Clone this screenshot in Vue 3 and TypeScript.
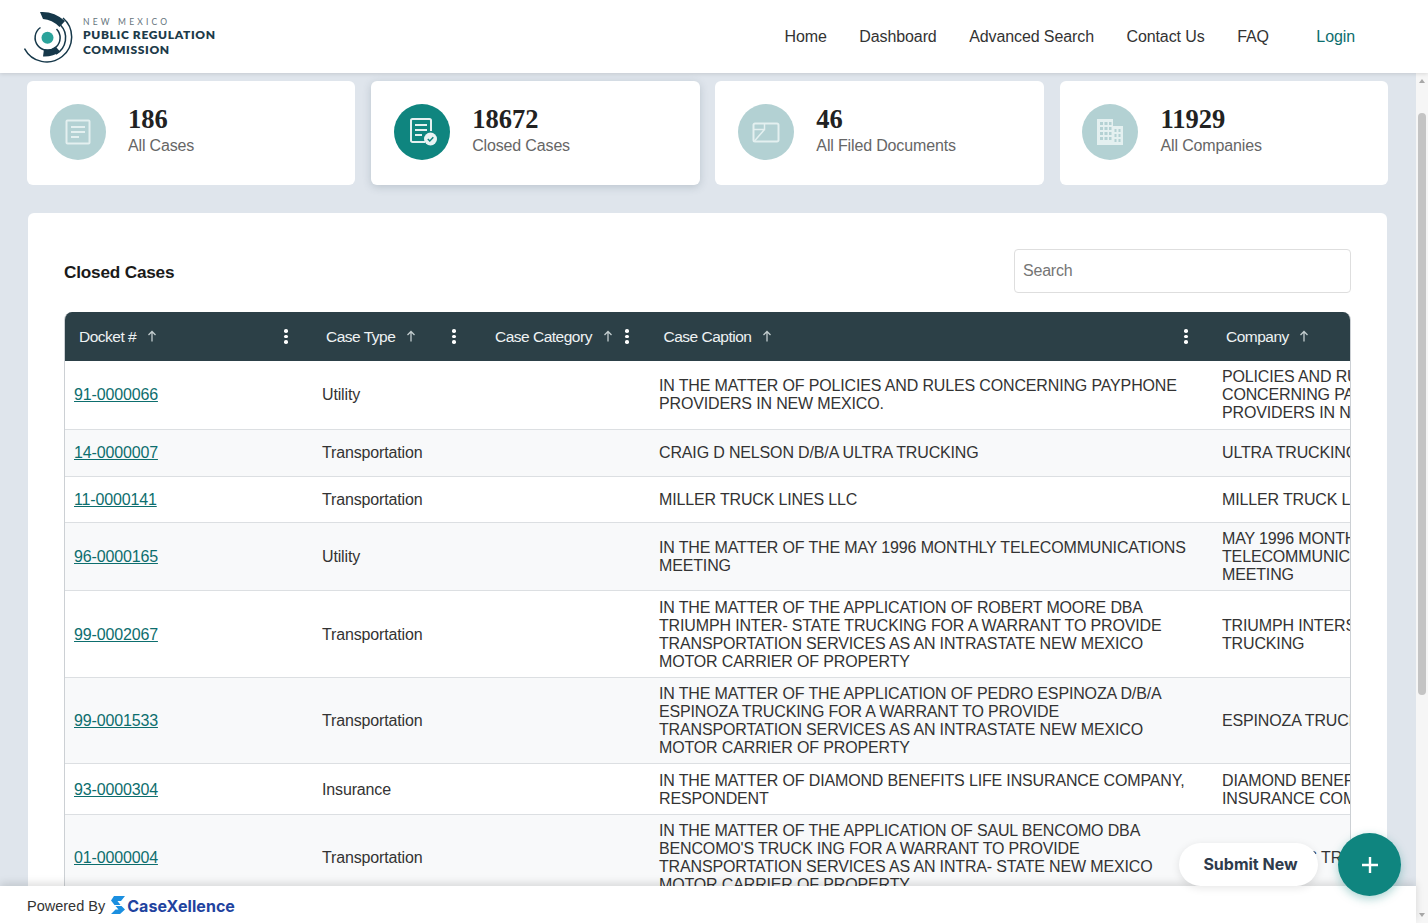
<script setup lang="ts">
interface Stat { value: string; label: string; icon: string; active?: boolean }
interface Row { docket: string; type: string; caption: string; company: string }

const nav: string[] = ['Home', 'Dashboard', 'Advanced Search', 'Contact Us', 'FAQ']

const stats: Stat[] = [
  { value: '186', label: 'All Cases', icon: 'doc' },
  { value: '18672', label: 'Closed Cases', icon: 'closed', active: true },
  { value: '46', label: 'All Filed Documents', icon: 'filed' },
  { value: '11929', label: 'All Companies', icon: 'company' },
]

const columns = [
  { label: 'Docket #', menu: true },
  { label: 'Case Type', menu: true },
  { label: 'Case Category', menu: true },
  { label: 'Case Caption', menu: true },
  { label: 'Company', menu: false },
]

const rows: Row[] = [
  { docket: '91-0000066', type: 'Utility', caption: 'IN THE MATTER OF POLICIES AND RULES CONCERNING PAYPHONE PROVIDERS IN NEW MEXICO.', company: 'POLICIES AND RULES CONCERNING PAYPHONE PROVIDERS IN NEW MEXICO.' },
  { docket: '14-0000007', type: 'Transportation', caption: 'CRAIG D NELSON D/B/A ULTRA TRUCKING', company: 'ULTRA TRUCKING' },
  { docket: '11-0000141', type: 'Transportation', caption: 'MILLER TRUCK LINES LLC', company: 'MILLER TRUCK LINES LLC' },
  { docket: '96-0000165', type: 'Utility', caption: 'IN THE MATTER OF THE MAY 1996 MONTHLY TELECOMMUNICATIONS MEETING', company: 'MAY 1996 MONTHLY TELECOMMUNICATIONS MEETING' },
  { docket: '99-0002067', type: 'Transportation', caption: 'IN THE MATTER OF THE APPLICATION OF ROBERT MOORE DBA TRIUMPH INTER- STATE TRUCKING FOR A WARRANT TO PROVIDE TRANSPORTATION SERVICES AS AN INTRASTATE NEW MEXICO MOTOR CARRIER OF PROPERTY', company: 'TRIUMPH INTERSTATE TRUCKING' },
  { docket: '99-0001533', type: 'Transportation', caption: 'IN THE MATTER OF THE APPLICATION OF PEDRO ESPINOZA D/B/A ESPINOZA TRUCKING FOR A WARRANT TO PROVIDE TRANSPORTATION SERVICES AS AN INTRASTATE NEW MEXICO MOTOR CARRIER OF PROPERTY', company: 'ESPINOZA TRUCKING' },
  { docket: '93-0000304', type: 'Insurance', caption: 'IN THE MATTER OF DIAMOND BENEFITS LIFE INSURANCE COMPANY, RESPONDENT', company: 'DIAMOND BENEFITS LIFE INSURANCE COMPANY' },
  { docket: '01-0000004', type: 'Transportation', caption: "IN THE MATTER OF THE APPLICATION OF SAUL BENCOMO DBA BENCOMO'S TRUCK ING FOR A WARRANT TO PROVIDE TRANSPORTATION SERVICES AS AN INTRA- STATE NEW MEXICO MOTOR CARRIER OF PROPERTY", company: "BENCOMO'S TRUCKING" },
]
</script>

<template>
  <div class="page">
    <header class="topbar">
      <div class="brand">
        <svg class="brand-mark" viewBox="24 10 52 54" width="52" height="54" fill="none" aria-hidden="true">
          <path d="M24.5 47.5A25 25 0 1 0 63 17" stroke="#16384a" stroke-width="1.5" />
          <path d="M56 53A18.5 18.5 0 0 0 60.5 24" stroke="#16384a" stroke-width="1.5" />
          <path d="M40 11Q54 10 65 20L59.5 26Q52 18.500 43 18Z" fill="#16384a" />
          <path d="M44 48Q51 49.500 56 46L60 50.500Q53 56 43 55.500Z" fill="#16384a" />
          <path d="M40.500 26.500A12.500 12.500 0 1 0 56.500 28" stroke="#16384a" stroke-width="1.500" />
          <circle cx="47.500" cy="36.700" r="6" fill="#2ba39b" />
        </svg>
        <div class="brand-text">
          <span class="brand-state">NEW MEXICO</span>
          <span class="brand-name">PUBLIC REGULATION</span>
          <span class="brand-name">COMMISSION</span>
        </div>
      </div>
      <nav class="nav">
        <a v-for="item in nav" :key="item" class="nav-link">{{ item }}</a>
        <a class="nav-link login">Login</a>
      </nav>
    </header>

    <div class="body-row">
      <div class="content-col">
        <main class="main">
          <section class="stats">
            <article v-for="s in stats" :key="s.label" class="stat" :class="{ active: s.active }">
              <div class="stat-icon">
                <svg v-if="s.icon === 'doc'" viewBox="0 0 26 26" width="26" height="26" fill="none" stroke="#e4f0f0" stroke-width="2">
                  <rect x="1.500" y="1.500" width="23" height="23" rx="1" />
                  <path d="M6 8H20M6 13H20M6 18H14" />
                </svg>
                <svg v-else-if="s.icon === 'closed'" viewBox="0 0 30 30" width="30" height="30" fill="none" stroke="#e4f0f0" stroke-width="2">
                  <path d="M17 25H4.500A1.500 1.500 0 0 1 3 23.500V3.500A1.500 1.500 0 0 1 4.500 2H21.500A1.500 1.500 0 0 1 23 3.500V14" />
                  <path d="M7 8H19M7 13H19M7 18H14" />
                  <circle cx="22.500" cy="22" r="6.500" fill="#e9f3f3" stroke="none" />
                  <path d="M19.800 22L21.800 24L25.300 20.300" stroke="#0f857f" stroke-width="1.500" />
                </svg>
                <svg v-else-if="s.icon === 'filed'" viewBox="0 0 28 22" width="28" height="22" fill="none" stroke="#e4f0f0" stroke-width="2">
                  <path d="M3 2.500H25A1.500 1.500 0 0 1 26.500 4V19A1.500 1.500 0 0 1 25 20.500H3A1.500 1.500 0 0 1 1.500 19V4A1.500 1.500 0 0 1 3 2.500Z" />
                  <path d="M2 8.500H12.500V2.500M2.500 20L12.500 8.500" stroke-width="1.500" />
                </svg>
                <svg v-else viewBox="0 0 28 28" width="28" height="28" fill="#e4f0f0">
                  <path d="M1 1H17V8H27V27H1ZM4 4V7H7V4ZM8.500 4V7H11.500V4ZM13 4V7H15.500V4ZM4 9V12H7V9ZM8.500 9V12H11.500V9ZM13 9V12H15.500V9ZM4 14V17H7V14ZM8.500 14V17H11.500V14ZM13 14V17H15.500V14ZM4 19V22H7V19ZM8.500 19V22H11.500V19ZM13 19V22H15.500V19ZM18.500 11V14H20.500V11ZM22.500 11V14H24.500V11ZM18.500 16V19H20.500V16ZM22.500 16V19H24.500V16ZM18.500 21V24H20.500V21ZM22.500 21V24H24.500V21Z" fill-rule="evenodd" />
                </svg>
              </div>
              <div class="stat-text">
                <strong class="stat-value">{{ s.value }}</strong>
                <span class="stat-label">{{ s.label }}</span>
              </div>
            </article>
          </section>

          <section class="panel">
            <div class="panel-head">
              <h2 class="panel-title">Closed Cases</h2>
              <input class="search" type="text" placeholder="Search" />
            </div>
            <div class="table">
              <div class="table-head grid-row">
                <div v-for="c in columns" :key="c.label" class="th">
                  <span class="th-label">{{ c.label }}</span>
                  <svg class="sort" viewBox="0 0 10 12" width="10" height="12" fill="none" stroke="#c3cdcf" stroke-width="1.300">
                    <path d="M5 11.500V1.500M1.500 5L5 1.500L8.500 5" />
                  </svg>
                  <span v-if="c.menu" class="th-menu"><i></i><i></i><i></i></span>
                </div>
              </div>
              <div v-for="r in rows" :key="r.docket" class="grid-row tr">
                <div class="td first"><a class="docket">{{ r.docket }}</a></div>
                <div class="td">{{ r.type }}</div>
                <div class="td"></div>
                <div class="td caption">{{ r.caption }}</div>
                <div class="td">{{ r.company }}</div>
              </div>
            </div>
          </section>
        </main>

        <footer class="footer">
          <span class="powered">Powered By</span>
          <svg class="cx-mark" viewBox="0 0 14 18" width="14" height="18" aria-hidden="true">
            <path d="M3 0H14L10 5H6.500L9.500 9L3.500 9L0 4.500Z" fill="#1b8fe0" />
            <path d="M4.500 10H10.500L14 13.500L9 18H0L4.500 13.500H7.500Z" fill="#1b8fe0" />
          </svg>
          <span class="cx-name">CaseXellence</span>
        </footer>
      </div>

      <div class="scrollbar">
        <span class="scroll-arrow up"></span>
        <span class="scroll-thumb"></span>
        <span class="scroll-arrow down"></span>
      </div>
    </div>

    <div class="fab-wrap">
      <span class="fab-label">Submit New</span>
      <button class="fab" type="button" aria-label="Submit New">
        <svg viewBox="0 0 18 18" width="18" height="18" stroke="#fff" stroke-width="2.400"><path d="M9 1V17M1 9H17" /></svg>
      </button>
    </div>
  </div>
</template>

<style>
html, body { margin: 0; height: 100%; overflow: hidden; }
</style>

<style scoped>
* { box-sizing: border-box; }
.page {
  position: relative;
  height: 923px;
  display: flex;
  flex-direction: column;
  overflow: hidden;
  font-family: "Liberation Sans", Arial, sans-serif;
  font-size: 16px;
  letter-spacing: -.15px;
  color: #333;
  background: #fff;
}
.topbar {
  height: 73px;
  flex: none;
  position: relative;
  z-index: 3;
  display: flex;
  align-items: center;
  justify-content: space-between;
  padding: 0 73px 0 24px;
  background: #fff;
  box-shadow: 0 1px 4px rgba(0, 0, 0, .12);
}
.brand { display: flex; align-items: center; gap: 7px; }
.brand-mark { display: block; margin-top: 2px; flex: none; }
.brand-text { display: flex; flex-direction: column; margin-top: 2px; }
.brand-state {
  font-family: Lato, sans-serif;
  font-size: 8.500px;
  line-height: 9px;
  letter-spacing: 3.200px;
  color: #66747c;
}
.brand-name {
  font-family: Lato, sans-serif;
  font-weight: 800;
  font-size: 12px;
  line-height: 15px;
  letter-spacing: .65px;
  color: #1d3b4a;
}
.nav { display: flex; align-items: center; gap: 32.500px; }
.nav-link { color: #333; white-space: nowrap; letter-spacing: -.1px; }
.login { color: #0d6e6e; margin-left: 15px; }

.body-row { flex: 1; min-height: 0; display: flex; }
.content-col { flex: 1; min-width: 0; display: flex; flex-direction: column; }
.main {
  flex: 1;
  min-height: 0;
  overflow: hidden;
  background: #dfe5ec;
  padding: 8px 28px 0 27px;
}
.stats { display: grid; grid-template-columns: repeat(4, 1fr); gap: 15.750px; }
.stat {
  height: 104px;
  display: flex;
  align-items: center;
  gap: 22.300px;
  padding: 0 0 2px 22.700px;
  background: #fff;
  border-radius: 6px;
}
.stat.active { box-shadow: 0 2px 8px rgba(60, 80, 100, .22); }
.stat-icon {
  width: 56px;
  height: 56px;
  flex: none;
  border-radius: 50%;
  background: #b3d1d3;
  display: flex;
  align-items: center;
  justify-content: center;
}
.active .stat-icon { background: #0f857f; padding-left: 2px; }
.stat-text { display: flex; flex-direction: column; margin-top: -2px; }
.stat-value {
  font-family: "Liberation Serif", "Times New Roman", serif;
  font-weight: 700;
  font-size: 26.500px;
  line-height: 28px;
  margin-bottom: 2px;
  letter-spacing: 0;
  color: #222;
}
.stat-label { line-height: 22px; color: #666; }

.panel {
  margin: 28px 1px 0;
  padding: 36px 36px 0;
  background: #fff;
  border-radius: 6px 6px 0 0;
  min-height: 720px;
}
.panel-head {
  height: 44px;
  display: flex;
  align-items: center;
  justify-content: space-between;
  margin-bottom: 19px;
}
.panel-title { margin: 2px 0 0; font-size: 17.200px; font-weight: 700; color: #1a1a1a; letter-spacing: -.2px; }
.search {
  width: 337px;
  height: 44px;
  padding: 0 8px;
  border: 1px solid #dedede;
  border-radius: 4px;
  background: #fff;
  font: 16px "Liberation Sans", Arial, sans-serif;
  letter-spacing: -.2px;
  outline: none;
}
.search::placeholder { color: #757575; opacity: 1; }

.table {
  width: 1287px;
  overflow: hidden;
  border-left: 1px solid #ccd0d4;
  border-right: 1px solid #ccd0d4;
  border-radius: 8px 8px 0 0;
}
.grid-row {
  display: grid;
  grid-template-columns: 248px 169px 169px 563px 253px;
  width: 1402px;
}
.table-head { height: 49px; background: #2c4047; margin-left: -1px; }
.th {
  position: relative;
  display: flex;
  align-items: center;
  gap: 11px;
  padding-left: 14px;
  color: #eef2f3;
  font-size: 15.500px;
  letter-spacing: -.5px;
  white-space: nowrap;
}
.grid-row > .th:first-child { padding-left: 15px; }
.grid-row > .th:nth-child(4) { padding-left: 13.500px; }
.grid-row > .th:nth-child(5) { padding-left: 13px; gap: 10px; }
.sort { flex: none; margin-top: -2px; }
.th-menu {
  position: absolute;
  right: 24px;
  top: 17px;
  width: 4px;
  display: flex;
  flex-direction: column;
  gap: 2px;
}
.th-menu i { width: 3.500px; height: 3.500px; border-radius: 50%; background: #fff; }
.grid-row > .th:nth-child(2) .th-menu { right: 25px; }
.grid-row > .th:nth-child(3) .th-menu { right: 21px; }
.grid-row > .th:nth-child(4) .th-menu { right: 25px; }

.tr {
  min-height: 46.500px;
  border-bottom: 1px solid #dcdfe2;
  background: #fff;
  margin-left: -1px;
}
.tr:nth-child(2) { min-height: 69px; }
.tr:nth-child(odd) { background: #f8f9fa; }
.td {
  display: flex;
  align-items: center;
  padding: 7.100px 9px 6.400px 10px;
  line-height: 18px;
  color: #333;
}
.td.caption { padding-left: 9px; }
.td:last-child { padding-left: 9px; }
.docket { color: #0d6e6e; text-decoration: underline; }

.footer {
  height: 37px;
  flex: none;
  position: relative;
  z-index: 2;
  display: flex;
  align-items: center;
  padding-left: 27px;
  background: #fff;
  box-shadow: 0 -3px 8px rgba(0, 0, 0, .13);
}
.powered { font-size: 14.500px; letter-spacing: 0; color: #333; margin-right: 6px; margin-top: 2px; }
.cx-mark { display: block; margin-top: 1px; }
.cx-name {
  margin: 2px 0 0 2px;
  font-family: Inter, sans-serif;
  font-weight: 700;
  font-size: 16px;
  letter-spacing: .05px;
  color: #1f439f;
}

.scrollbar {
  width: 12px;
  flex: none;
  position: relative;
  background: #f6f6f6;
}
.scroll-thumb {
  position: absolute;
  left: 2px;
  right: 2px;
  top: 40px;
  height: 582px;
  border-radius: 4px;
  background: #c4c4c4;
}
.scroll-arrow { position: absolute; left: 3px; border-left: 3px solid transparent; border-right: 3px solid transparent; }
.up { top: 6px; border-bottom: 4px solid #a8a8a8; }
.down { bottom: 6px; border-top: 4px solid #a8a8a8; }

.fab-wrap {
  position: absolute;
  left: 1179px;
  top: 833px;
  z-index: 4;
  width: 222px;
  height: 63px;
}
.fab-label {
  position: absolute;
  left: 0;
  top: 10px;
  width: 139px;
  height: 43px;
  padding: 0 0 2px 4px;
  display: flex;
  align-items: center;
  justify-content: center;
  background: #fff;
  border-radius: 22px;
  box-shadow: 0 2px 8px rgba(0, 0, 0, .1);
  font-family: Inter, sans-serif;
  font-weight: 700;
  font-size: 16px;
  letter-spacing: 0;
  color: #2f3b4c;
}
.fab {
  position: absolute;
  right: 0;
  top: 0;
  width: 63px;
  height: 63px;
  padding: 0;
  border: 0;
  border-radius: 50%;
  background: #0f857f;
  display: flex;
  align-items: center;
  justify-content: center;
  box-shadow: 0 3px 10px rgba(15, 133, 127, .35);
}
</style>
